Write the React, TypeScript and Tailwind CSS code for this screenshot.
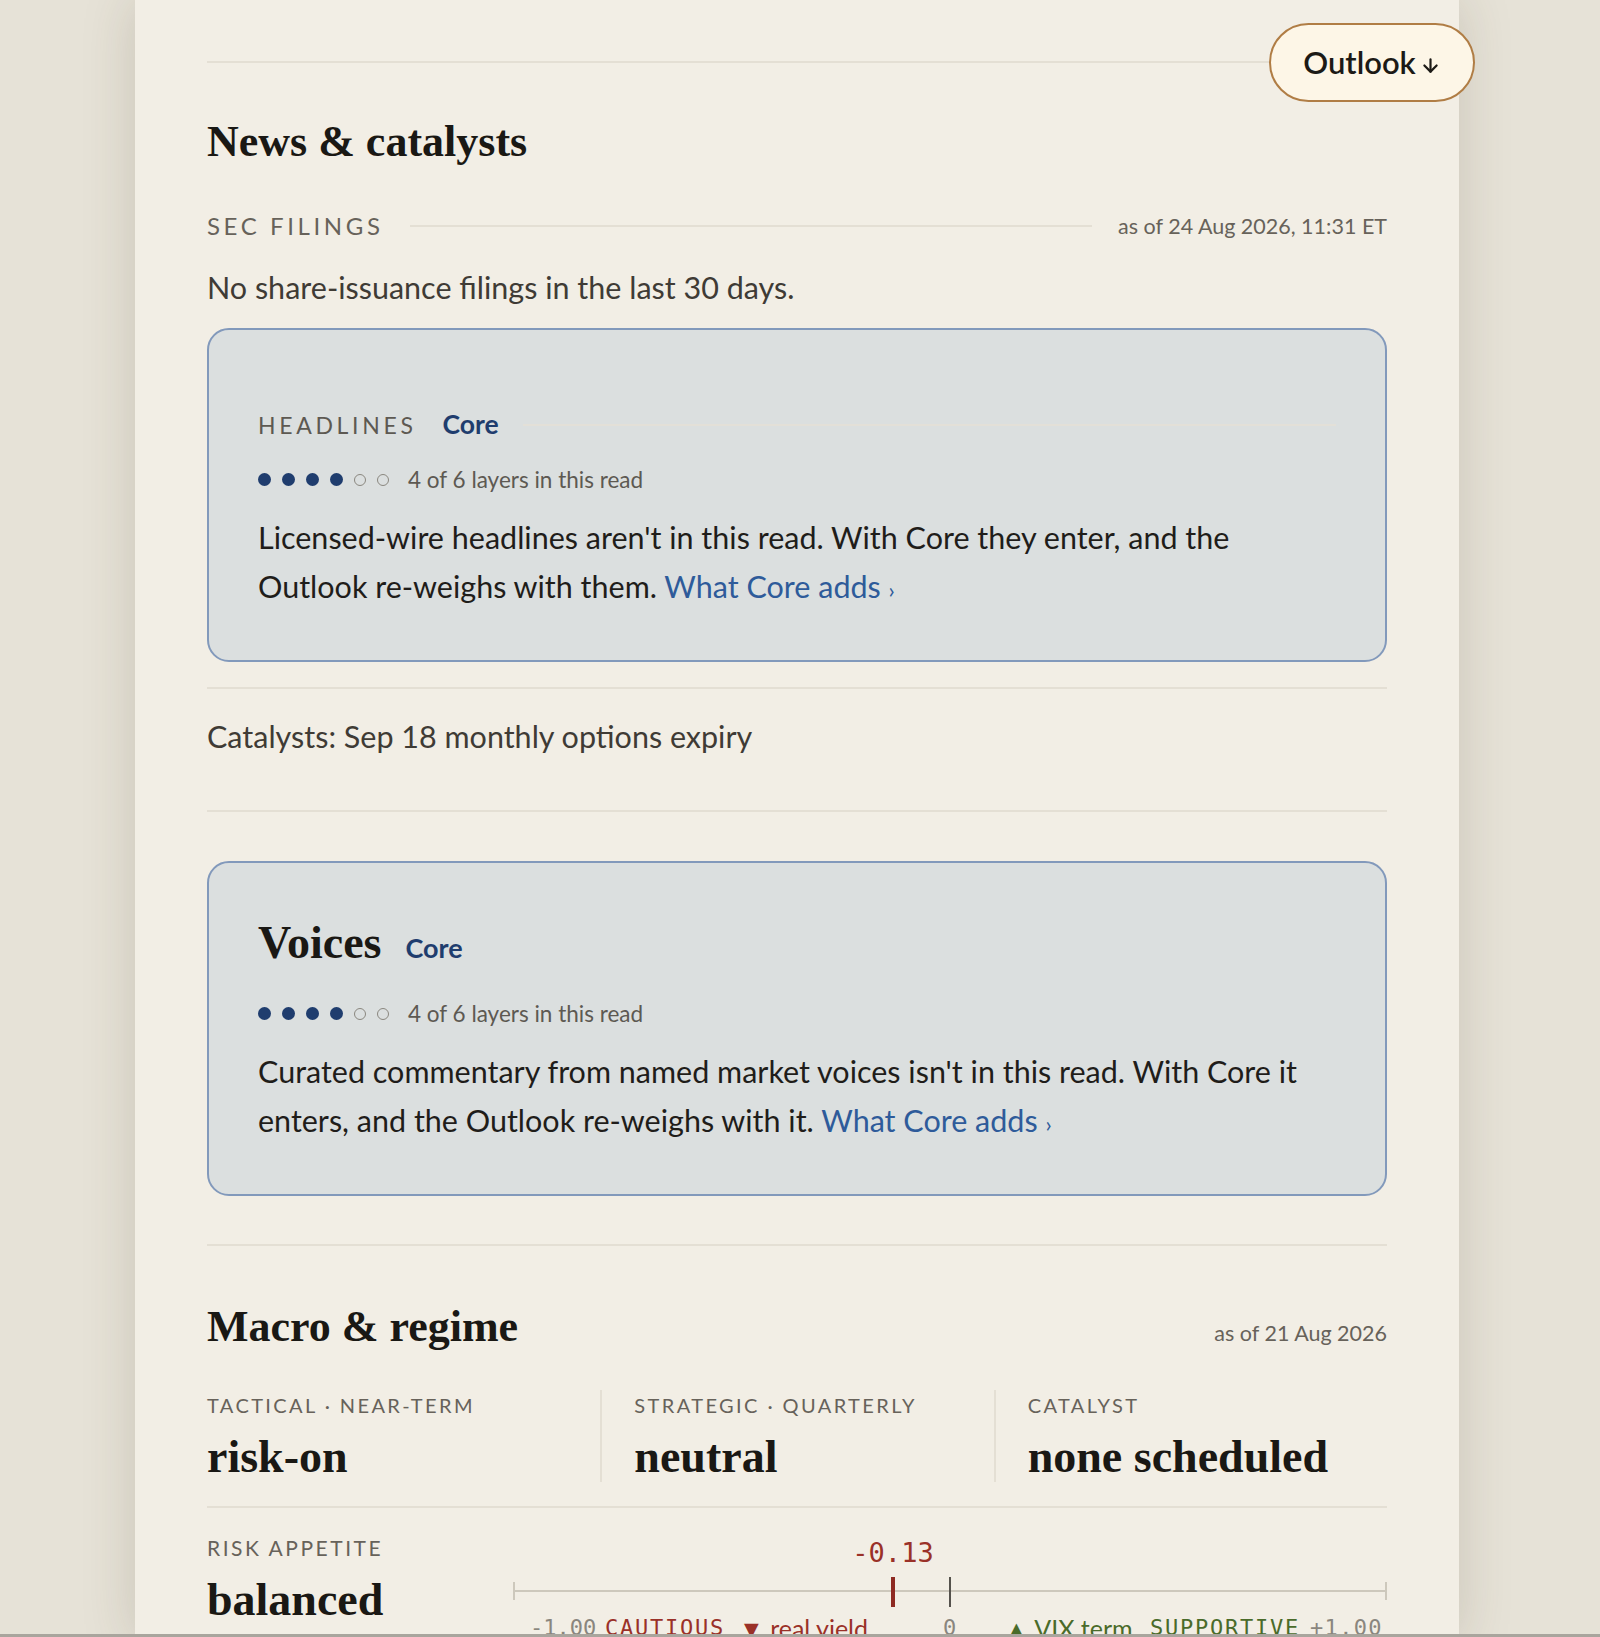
import { ArrowDown } from 'lucide-react';

const sans = "font-['Lato','Noto_Sans',sans-serif]";
const serif = "font-['Liberation_Serif','DejaVu_Serif',serif]";
const mono = "font-['DejaVu_Sans_Mono','Liberation_Mono',monospace]";

function LayerDots({ filled, total }: { filled: number; total: number }) {
  return (
    <div className="flex items-center">
      <div className="flex items-center gap-[11px]">
        {Array.from({ length: total }).map((_, i) =>
          i < filled ? (
            <span key={i} className="block w-[13px] h-[13px] rounded-full bg-[#1f3d6e]" />
          ) : (
            <span key={i} className="block w-[12px] h-[12px] rounded-full border-[1.5px] border-[#8a877f]" />
          )
        )}
      </div>
      <span className={`${sans} ml-[19px] text-[22.5px] text-[#5d5952]`}>
        {filled} of {total} layers in this read
      </span>
    </div>
  );
}

function CoreLink() {
  return (
    <a href="#" className="text-[#2e5b9a]">
      What Core adds <span className="text-[22px]">›</span>
    </a>
  );
}

function Divider({ className = '' }: { className?: string }) {
  return <div className={`h-[2px] bg-[#e4dfd4] ${className}`} />;
}

export default function App() {
  return (
    <div className="h-[1637px] flex flex-col bg-[#e6e2d7] overflow-hidden">
      <div className="flex-1 overflow-hidden">
        <div className="relative ml-[135px] w-[1324px] min-h-full bg-[#f2eee5] shadow-[0_0_50px_rgba(70,60,40,0.18)] px-[72px] pt-[61px]">
          {/* floating jump button */}
          <button
            className={`${sans} absolute top-[23px] right-[-16px] h-[79px] w-[206px] rounded-full border-2 border-[#b07d45] bg-[#fdf6e7] flex items-center justify-center gap-[4px] text-[31px] font-semibold text-[#1c1a16]`}
          >
            Outlook
            <ArrowDown size={21} strokeWidth={2.5} className="mt-[6px]" />
          </button>

          <Divider />

          {/* News & catalysts */}
          <h2 className={`${serif} mt-[55px] text-[44px] leading-[48px] font-bold text-[#1a1814]`}>
            News &amp; catalysts
          </h2>

          <div className="mt-[42px] flex items-center gap-[26px]">
            <span className={`${sans} text-[24px] tracking-[0.15em] text-[#67625a]`}>SEC FILINGS</span>
            <div className="flex-1 h-[2px] bg-[#e4dfd4]" />
            <span className={`${sans} text-[21.5px] text-[#67625a]`}>as of 24 Aug 2026, 11:31 ET</span>
          </div>

          <p className={`${sans} mt-[23px] text-[30.5px] leading-[40px] text-[#3f3b35]`}>
            No share-issuance filings in the last 30 days.
          </p>

          {/* headlines card */}
          <div className="mt-[21px] rounded-[22px] border-2 border-[#8299bb] bg-[#dbdfdf] px-[49px] pt-[75px] pb-[46px]">
            <div className="flex items-center">
              <span className={`${sans} text-[23px] tracking-[0.16em] text-[#5d5952]`}>HEADLINES</span>
              <span className={`${sans} ml-[26px] text-[26.5px] font-bold text-[#1f3d6e]`}>Core</span>
              <div className="ml-[24px] flex-1 h-[2px] bg-[#e3e0d8]" />
            </div>
            <div className="mt-[18px]">
              <LayerDots filled={4} total={6} />
            </div>
            <p className={`${sans} mt-[16px] text-[30.5px] leading-[49px] text-[#1f1d1a]`}>
              Licensed-wire headlines aren't in this read. With Core they enter, and the Outlook re-weighs with
              them. <CoreLink />
            </p>
          </div>

          <Divider className="mt-[25px]" />

          <p className={`${sans} mt-[27px] text-[30.5px] leading-[40px] text-[#3f3b35]`}>
            Catalysts: Sep 18 monthly options expiry
          </p>

          <Divider className="mt-[54px]" />

          {/* voices card */}
          <div className="mt-[49px] rounded-[22px] border-2 border-[#8299bb] bg-[#dbdfdf] px-[49px] pt-[56px] pb-[46px]">
            <div className="flex items-baseline">
              <h3 className={`${serif} text-[46px] leading-[48px] font-bold text-[#1a1814]`}>Voices</h3>
              <span className={`${sans} ml-[24px] text-[27px] font-bold text-[#1f3d6e]`}>Core</span>
            </div>
            <div className="mt-[29px]">
              <LayerDots filled={4} total={6} />
            </div>
            <p className={`${sans} mt-[16px] text-[30.5px] leading-[49px] text-[#1f1d1a]`}>
              Curated commentary from named market voices isn't in this read. With Core it enters, and the
              Outlook re-weighs with it. <CoreLink />
            </p>
          </div>

          <Divider className="mt-[48px]" />

          {/* Macro & regime */}
          <div className="mt-[57px] flex items-baseline justify-between">
            <h2 className={`${serif} text-[44px] leading-[48px] font-bold text-[#1a1814]`}>Macro &amp; regime</h2>
            <span className={`${sans} text-[21.5px] text-[#67625a]`}>as of 21 Aug 2026</span>
          </div>

          <div className="mt-[39px] grid grid-cols-3">
            {[
              ['TACTICAL · NEAR-TERM', 'risk-on'],
              ['STRATEGIC · QUARTERLY', 'neutral'],
              ['CATALYST', 'none scheduled'],
            ].map(([label, value], i) => (
              <div key={label} className={i === 0 ? '' : 'border-l-2 border-[#e4dfd4] pl-[32px]'}>
                <div className={`${sans} text-[20px] tracking-[0.12em] text-[#67625a]`}>{label}</div>
                <div className={`${serif} mt-[12px] text-[46px] leading-[50px] font-bold text-[#1a1814]`}>{value}</div>
              </div>
            ))}
          </div>

          <Divider className="mt-[24px]" />

          {/* risk appetite gauge */}
          <div className="mt-[24px] flex">
            <div className="w-[306px] shrink-0">
              <div className={`${sans} text-[21px] tracking-[0.12em] text-[#67625a]`}>RISK APPETITE</div>
              <div className={`${serif} mt-[12px] text-[46px] leading-[50px] font-bold text-[#1a1814]`}>balanced</div>
            </div>
            <div className="flex-1">
              <svg width="874" height="80" viewBox="0 0 874 80" className="block">
                <text x="380" y="30" textAnchor="middle" fill="#9a3128" fontSize="27" fontFamily="DejaVu Sans Mono, monospace">
                  -0.13
                </text>
                <line x1="1" y1="59" x2="873" y2="59" stroke="#cdc8bc" strokeWidth="2" />
                <line x1="1" y1="50" x2="1" y2="68" stroke="#cdc8bc" strokeWidth="2" />
                <line x1="873" y1="50" x2="873" y2="68" stroke="#cdc8bc" strokeWidth="2" />
                <line x1="437" y1="45" x2="437" y2="75" stroke="#55524c" strokeWidth="2" />
                <line x1="380" y1="45" x2="380" y2="75" stroke="#8e2a22" strokeWidth="4" />
              </svg>
              <div className={`${mono} relative h-[30px] text-[22px] leading-[30px]`}>
                <span className="absolute left-[17px] top-[1px] text-[#8a867e]">-1.00</span>
                <span className="absolute left-[92px] top-[1px] tracking-[0.08em] text-[#9a3128]">CAUTIOUS</span>
                <span className={`${sans} absolute left-[226px] top-[1px] text-[25px] text-[#9a3128]`}>▼ real yield</span>
                <span className="absolute left-[430px] top-[1px] text-[#8a867e]">0</span>
                <span className={`${sans} absolute left-[491px] top-[1px] text-[25px] text-[#4a6b2a]`}>▲ VIX term</span>
                <span className="absolute left-[637px] top-[1px] tracking-[0.08em] text-[#4a6b2a]">SUPPORTIVE</span>
                <span className="absolute left-[797px] top-[1px] tracking-[0.06em] text-[#8a867e]">+1.00</span>
              </div>
            </div>
          </div>
        </div>
      </div>
      <div className="h-[3px] bg-[#a9a59d]" />
    </div>
  );
}
